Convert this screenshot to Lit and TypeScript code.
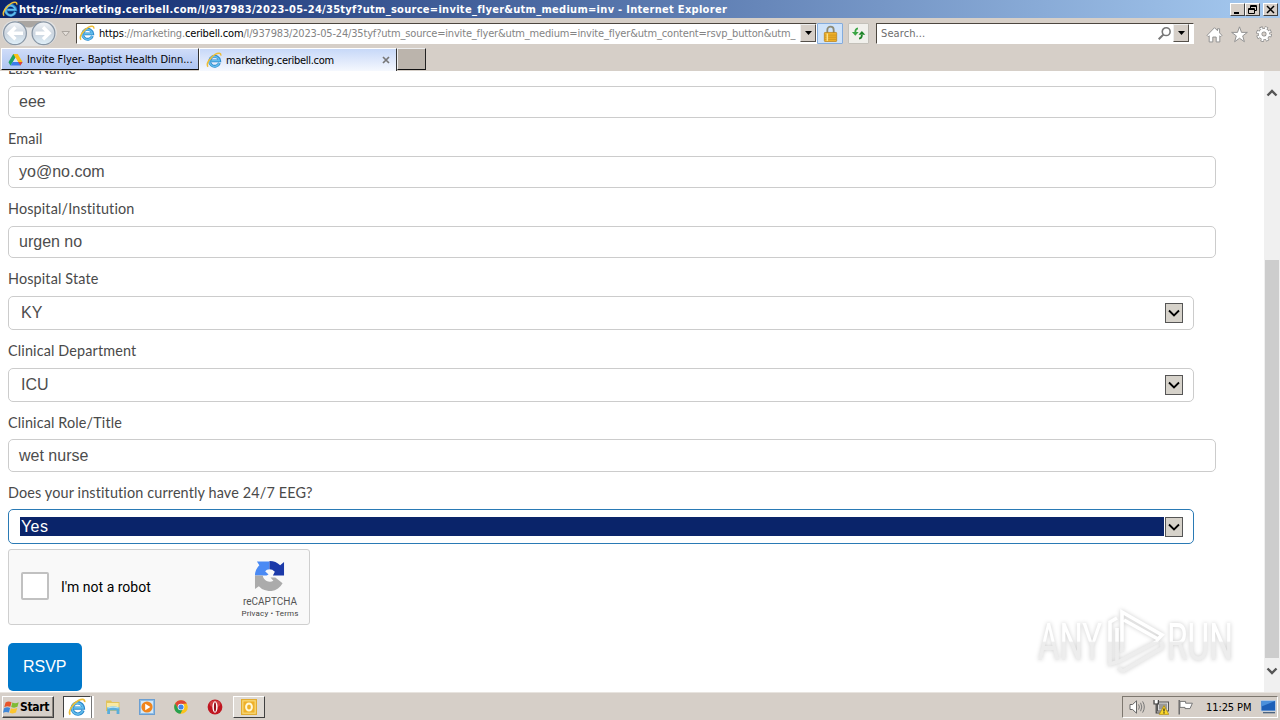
import { LitElement, html, css, svg } from 'lit';
import { customElement, property } from 'lit/decorators.js';
import { classMap } from 'lit/directives/class-map.js';

interface Field {
  label: string;
  value: string;
  kind: 'text' | 'select';
  tight?: boolean;
  focused?: boolean;
}

const FIELDS: Field[] = [
  { label: 'Last Name', value: 'eee', kind: 'text' },
  { label: 'Email', value: 'yo@no.com', kind: 'text' },
  { label: 'Hospital/Institution', value: 'urgen no', kind: 'text' },
  { label: 'Hospital State', value: 'KY', kind: 'select' },
  { label: 'Clinical Department', value: 'ICU', kind: 'select' },
  { label: 'Clinical Role/Title', value: 'wet nurse', kind: 'text', tight: true },
  { label: 'Does your institution currently have 24/7 EEG?', value: 'Yes', kind: 'select', tight: true, focused: true },
];

const icons: Record<string, unknown> = {
  ie: svg`
    <path d="M13.4 11 A5 5 0 1 1 13.7 8.9 H5.4" fill="none" stroke="#2b88cc" stroke-width="2.9"/>
    <path d="M13.2 11 A4.9 4.9 0 1 1 13.4 8.8 H5.4" fill="none" stroke="#62bdec" stroke-width="1.5"/>
    <path d="M2 14.8 C-0.4 12 4.2 5 9.2 2.3 C12.4 .6 15.2 .8 14.8 3.6" fill="none" stroke="#eebd36" stroke-width="1.5"/>`,
  drive: svg`
    <path d="M5.6 2 H10.2 L5 11 L2.6 14.4 L0.5 10.8Z" fill="#1fa463"/>
    <path d="M5.6 2 H10.4 L15.5 10.6 H10.8Z" fill="#fbc116"/>
    <path d="M8 6.2 L10.6 10.6 H5.4Z" fill="#d9e4f8"/>
    <path d="M5 10.6 H15.5 L13.2 14.5 H2.7Z" fill="#3b7bea"/>
    <path d="M10.8 10.6 H15.5 L13.2 14.5Z" fill="#e34133"/>`,
  lock: svg`
    <path d="M5 8 V4.6 A3 3 0 0 1 11 4.6 V8" fill="none" stroke="#8c8a76" stroke-width="1.7"/>
    <rect x="2.2" y="7" width="11.6" height="8.5" rx=".6" fill="#eeb12c" stroke="#b98119" stroke-width=".7"/>
    <path d="M2.6 9.5H13.4M2.6 11.5H13.4M2.6 13.5H13.4" stroke="#c98d18" stroke-width=".7"/>
    <path d="M5 8V15" stroke="#fbe08a" stroke-width="1.4"/>`,
  refresh: svg`
    <path d="M7.4 2.6 Q4.6 3 4.6 6.5" fill="none" stroke="#3aa544" stroke-width="1.9"/>
    <path d="M1 6.4 H8.2 L4.6 10.4Z" fill="#3aa544"/>
    <path d="M8.6 13.4 Q11.6 13 11.6 9.5" fill="none" stroke="#1c8427" stroke-width="1.9"/>
    <path d="M8 9.4 H15.2 L11.6 5.4Z" fill="#1c8427"/>`,
  search: svg`
    <circle cx="9.8" cy="6" r="4.2" fill="#fff" stroke="#777" stroke-width="1.7"/>
    <path d="M6.8 9.2 L1.8 14.2" stroke="#777" stroke-width="2.2"/>`,
  home: svg`
    <path d="M1 8.8 L8 1.6 L10.8 4.4 V2.6 H12.8 V6.5 L15 8.8 L13.8 10 L13 9.2 V15 H9.6 V10.4 H6.4 V15 H3 V9.2 L2.2 10Z"
      fill="#fff" stroke="#8f8f8f" stroke-width=".9" stroke-linejoin="round"/>`,
  star: svg`
    <path d="M8 .8 L9.9 6 H15.4 L11 9.3 L12.6 14.8 L8 11.5 L3.4 14.8 L5 9.3 L.6 6 H6.1Z"
      fill="#fff" stroke="#8f8f8f" stroke-width=".9" stroke-linejoin="round"/>`,
  gear: svg`
    <circle cx="8" cy="8" r="6.2" fill="none" stroke="#8a8a8a" stroke-width="3.4" stroke-dasharray="2.9 1.97"/>
    <circle cx="8" cy="8" r="3.9" fill="none" stroke="#8a8a8a" stroke-width="4.2"/>
    <circle cx="8" cy="8" r="6" fill="none" stroke="#fff" stroke-width="2.2" stroke-dasharray="1.9 2.81" stroke-dashoffset="-.4"/>
    <circle cx="8" cy="8" r="3.9" fill="none" stroke="#fff" stroke-width="2.8"/>`,
  windows: svg`
    <path d="M2.4 3.2 Q5 1.4 8 3 L6.9 7.4 Q4 6.2 1.2 7.7Z" fill="#e8552a"/>
    <path d="M8.8 3.3 Q11.6 4.6 14.8 3 L13.6 7.4 Q10.8 8.8 7.7 7.6Z" fill="#7fbb35"/>
    <path d="M1 8.6 Q4 7.2 6.7 8.4 L5.5 12.8 Q2.8 11.6 0 13Z" fill="#3f87d8"/>
    <path d="M7.5 8.6 Q10.4 9.8 13.4 8.4 L12.2 12.8 Q9.4 14.2 6.3 13Z" fill="#fcc52e"/>`,
  explorer: svg`
    <path d="M1 1.6 H6 L7 3 H14.5 V12 H1Z" fill="#e2c45c"/>
    <path d="M2 4 H13.6 V10 H2Z" fill="#f8e9a4"/>
    <path d="M2.2 8.6 Q8 6.6 14.4 8.6 V15 H11.6 V11.6 H5 V15 H2.2Z" fill="#5aaedb"/>
    <path d="M3 9 Q8 7.4 13.6 9" fill="none" stroke="#b6e4f6" stroke-width="1.2"/>`,
  media: svg`
    <rect x=".5" y=".5" width="15" height="15" fill="#8ebde6" stroke="#6b9fd2"/>
    <rect x="2" y="2" width="12" height="12" fill="#d3e8f8"/>
    <circle cx="8" cy="8" r="5.6" fill="#f0851c"/>
    <path d="M6.2 4.8 L11.4 8 L6.2 11.2Z" fill="#fff"/>`,
  chrome: svg`
    <circle cx="8" cy="8" r="6.8" fill="#fbc31a"/>
    <path d="M2.1 4.6 A6.8 6.8 0 0 1 13.9 4.6 L8 5 L5 9.7Z" fill="#df4536"/>
    <path d="M2.1 4.6 L5.4 10 L9.6 10.6 L7.4 14.8 A6.8 6.8 0 0 1 2.1 4.6Z" fill="#27a050"/>
    <circle cx="8" cy="8" r="3.3" fill="#fff"/>
    <circle cx="8" cy="8" r="2.6" fill="#4285e8"/>`,
  opera: svg`
    <circle cx="8" cy="8" r="7.4" fill="#c01620"/>
    <ellipse cx="8" cy="5" rx="5.4" ry="3.5" fill="#dc5a5a" opacity=".6"/>
    <ellipse cx="8" cy="8" rx="2.6" ry="5.8" fill="#fff"/>
    <ellipse cx="8" cy="8" rx="1.1" ry="4.8" fill="#96101a"/>`,
  outlook: svg`
    <rect x=".6" y=".6" width="14.8" height="14.8" fill="#fbdc7c" stroke="#e2ab31" stroke-width="1.2"/>
    <path d="M2.4 2.4 H13.6 V13.6 H2.4Z" fill="#eeb02a"/>
    <ellipse cx="8" cy="8" rx="2.9" ry="3.6" fill="none" stroke="#fff8d8" stroke-width="2"/>`,
  speaker: svg`
    <path d="M1 5.5 H3.6 L7.5 1.8 V14.2 L3.6 10.5 H1Z" fill="#fff" stroke="#666" stroke-width="1"/>
    <path d="M9.6 5.4 Q11.2 8 9.6 10.6 M11.6 3.8 Q14 8 11.6 12.2 M13.6 2.4 Q17 8 13.6 13.6" fill="none" stroke="#777" stroke-width="1"/>`,
  network: svg`
    <rect x="4.5" y="3" width="11" height="9" fill="#ddd" stroke="#555"/>
    <rect x="6" y="4.5" width="8" height="6" fill="#9a9a9a"/>
    <path d="M1.6 1 H4.8 V4.4 H1.6Z" fill="#fff"/>
    <path d="M1 1 V5 H5.4 V1 M3.2 5 V14 H9" fill="none" stroke="#444" stroke-width="1.2"/>
    <path d="M11 6.6 L15.8 15.4 H6.2Z" fill="#fcd92a" stroke="#ac8708" stroke-width=".7"/>
    <path d="M11 9.4 V12.4 M11 13.2 V14.4" stroke="#222" stroke-width="1.2"/>`,
  flag: svg`
    <path d="M2.2 1 V15.4" stroke="#666" stroke-width="1.4"/>
    <path d="M3 2.4 H8.6 V4.2 H15.4 L13 9.6 H8 V8.4 H3Z" fill="#fff" stroke="#777" stroke-width="1"/>`,
  desktop: svg`
    <rect x="1" y="1.5" width="14.5" height="10.5" fill="#1d5fb8" stroke="#bcd2ea" stroke-width=".8"/>
    <path d="M1.5 2 H15 L1.5 7.5Z" fill="#4b90dc"/>
    <path d="M3 13.7 H15" stroke="#3d5878" stroke-width="1.2"/>`,
};

const icon = (name: string, size = 16) => html`
  <svg width=${size} height=${size} viewBox="0 0 16 16">${icons[name]}</svg>`;

const caret = html`<svg width="7" height="4" viewBox="0 0 7 4"><path d="M0 0H7L3.5 4Z" fill="#000"/></svg>`;

@customElement('browser-chrome')
class BrowserChrome extends LitElement {
  static styles = css`
    :host {
      display: block;
      height: 71px;
      background: #d6cfc8;
      font-family: 'DejaVu Sans Condensed', 'DejaVu Sans', sans-serif;
      font-stretch: condensed;
      font-size: 11px;
      color: #000;
    }
    svg { display: block; flex: none; }
    .title {
      display: flex;
      align-items: center;
      height: 18px;
      padding: 0 2px;
      box-sizing: border-box;
      background: linear-gradient(90deg, #0a246a, #a6caf0);
      color: #fff;
    }
    .title-text {
      flex: 1;
      margin-left: 1px;
      white-space: nowrap;
      font-family: 'DejaVu Sans', sans-serif;
      font-stretch: condensed;
      font-size: 11px;
      font-weight: bold;
      letter-spacing: 0.29px;
    }
    .win {
      width: 15px;
      height: 13px;
      box-sizing: border-box;
      background: #d6cfc8;
      border: 1px solid;
      border-color: #fff #404040 #404040 #fff;
    }
    .win.close { margin-left: 3px; }
    .nav {
      display: flex;
      align-items: center;
      height: 30px;
    }
    .address {
      display: flex;
      align-items: center;
      width: 741px;
      height: 21px;
      box-sizing: border-box;
      border: 1px solid #fff;
      border-top: 1px solid #4c463f;
      border-left-color: #4c463f;
      background: #fff;
      padding-left: 2px;
    }
    .url {
      width: 698px;
      margin-left: 4px;
      overflow: hidden;
      white-space: nowrap;
      color: #848484;
      letter-spacing: -0.17px;
    }
    .url b { font-weight: normal; color: #000; }
    .drop {
      display: flex;
      align-items: center;
      justify-content: center;
      width: 16px;
      height: 18px;
      box-sizing: border-box;
      background: #d6cfc8;
      border: 1px solid;
      border-color: #eee #55504a #55504a #eee;
      margin-left: auto;
    }
    .tool {
      display: flex;
      align-items: center;
      justify-content: center;
      height: 21px;
      box-sizing: border-box;
      border: 1px solid #c4c1ba;
      border-radius: 1px;
    }
    .tool.lock { width: 26px; background: #cfe3fa; border-color: #84acdd; }
    .tool.refresh { width: 21px; background: #f1f0ec; margin-left: 5px; }
    .search {
      display: flex;
      align-items: center;
      width: 318px;
      height: 21px;
      box-sizing: border-box;
      margin-left: 7px;
      padding: 0 4px;
      background: #fff;
      border: 1px solid #fff;
      border-top-color: #4c463f;
      border-left-color: #4c463f;
      color: #6d6d6d;
    }
    .search span { flex: 1; letter-spacing: 0.1px; }
    .search .drop { margin-left: 1px; }
    .links { display: flex; gap: 8px; margin-left: 12px; padding-top: 3px; }
    .tabs { display: flex; height: 23px; }
    .tab {
      display: flex;
      align-items: center;
      box-sizing: border-box;
      height: 22px;
      white-space: nowrap;
    }
    .tab.back {
      width: 198px;
      margin-left: 1px;
      padding-left: 6px;
      background: linear-gradient(#cfdcf8, #aec5f2);
      border: 1px solid #fff;
      border-right: 1px solid #333;
      border-bottom: 1px solid #111;
    }
    .tab.front {
      width: 198px;
      height: 23px;
      padding: 0 6px;
      background: linear-gradient(#c7d8f8, #f5f8fe);
      border: 1px solid #fff;
      border-right-color: #333;
      border-bottom: 0;
    }
    .tab span { margin-left: 4px; flex: 1; letter-spacing: -0.05px; }
    .tab.front span { letter-spacing: -0.28px; }
    .tab.new {
      width: 29px;
      background: #bbb4ac;
      border: 1px solid #eee;
      border-right: 1px solid #222;
      border-bottom: 1px solid #111;
    }
  `;

  render() {
    return html`
      <div class="title">
        ${icon('ie', 16)}
        <span class="title-text">https://marketing.ceribell.com/l/937983/2023-05-24/35tyf?utm_source=invite_flyer&amp;utm_medium=inv - Internet Explorer</span>
        <div class="win"><svg width="13" height="11"><path d="M3 9H8" stroke="#000" stroke-width="2"/></svg></div>
        <div class="win"><svg width="13" height="11"><path d="M4.5 4V1.5H10.5V6.5H8.5M4.5 2.5H10.5M2.5 4.5H8.5V9.5H2.5ZM2.5 5.5H8.5" fill="none" stroke="#000"/></svg></div>
        <div class="win close"><svg width="13" height="11"><path d="M3 2L10 9M10 2L3 9" stroke="#000" stroke-width="1.5"/></svg></div>
      </div>
      <div class="nav">
        ${this.renderTravel()}
        <div class="address">
          ${icon('ie', 16)}
          <div class="url"><b>https</b>://marketing.<b>ceribell.com</b>/l/937983/2023-05-24/35tyf?utm_source=invite_flyer&amp;utm_medium=invite_flyer&amp;utm_content=rsvp_button&amp;utm_</div>
          <div class="drop">${caret}</div>
        </div>
        <div class="tool lock">${icon('lock', 17)}</div>
        <div class="tool refresh">${icon('refresh', 15)}</div>
        <div class="search"><span>Search...</span>${icon('search', 15)}<div class="drop">${caret}</div></div>
        <div class="links">${icon('home', 17)}${icon('star', 17)}${icon('gear', 16)}</div>
      </div>
      <div class="tabs">
        <div class="tab back">${icon('drive', 15)}<span>Invite Flyer- Baptist Health Dinn...</span></div>
        <div class="tab front">
          ${icon('ie', 16)}<span>marketing.ceribell.com</span>
          <svg width="8" height="8"><path d="M1 1L7 7M7 1L1 7" stroke="#777" stroke-width="1.7"/></svg>
        </div>
        <div class="tab new"></div>
      </div>
    `;
  }

  renderTravel() {
    return html`
      <svg width="76" height="30" viewBox="0 0 76 30">
        <defs>
          <linearGradient id="orb" x1="0" y1="0" x2="0" y2="1">
            <stop offset="0" stop-color="#f4f6f9"/>
            <stop offset=".5" stop-color="#ccd5df"/>
            <stop offset="1" stop-color="#dff0fa"/>
          </linearGradient>
        </defs>
        <path d="M15 2.5 H44 Q56 3 57 15 Q55 27 43 28 H15 Q3 26 2 15 Q3 3 15 2.5Z" fill="#e2e2e2"/>
        <path d="M17 3 H42 L34 8 Q29 11 24 8Z" fill="#aaa6a2"/>
        <circle cx="15" cy="15.3" r="11.4" fill="url(#orb)" stroke="#8896a5" stroke-width="1.2"/>
        <circle cx="43.5" cy="15.3" r="11.4" fill="url(#orb)" stroke="#8896a5" stroke-width="1.2"/>
        <path d="M23 15.3H10M15.5 9.3L9.3 15.3L15.5 21.3" fill="none" stroke="#fff" stroke-width="3.4"/>
        <path d="M35.5 15.3H48.5M43 9.3L49.2 15.3L43 21.3" fill="none" stroke="#fff" stroke-width="3.4"/>
        <path d="M62 13.5H69.5L65.7 18Z" fill="#e4dfda" stroke="#aaa49e"/>
      </svg>`;
  }
}

@customElement('form-field')
class FormField extends LitElement {
  @property({ type: Object }) field!: Field;

  static styles = css`
    :host { display: block; }
    .label {
      display: flex;
      align-items: center;
      height: 38px;
      padding-top: 2px;
      box-sizing: border-box;
      font-family: Lato, 'Open Sans', sans-serif;
      font-size: 14.4px;
      letter-spacing: 0.14px;
      color: #4a4a4a;
      white-space: nowrap;
    }
    .tight .label { height: 37px; padding-top: 3px; }
    .box {
      display: flex;
      align-items: center;
      box-sizing: border-box;
      width: 1208px;
      height: 32px;
      padding: 0 10px;
      border: 1px solid #ccc;
      border-radius: 5px;
      background: #fff;
      font-family: 'Liberation Sans', Arial, sans-serif;
      font-size: 16px;
      color: #4d4d4d;
    }
    .tight .box { height: 33px; }
    .select .box { width: 1186px; height: 34px; }
    .select.tight .box { height: 35px; }
    .focused .box { border-color: #2a7ab5; }
    .value { flex: 1; line-height: 19px; margin-bottom: 2px; }
    .tight .value { margin-bottom: 0; }
    .select .value { padding-left: 2px; margin-right: 1px; }
    .focused .value {
      margin-left: 1px;
      padding-left: 1px;
      background: #0a246a;
      color: #fff;
      letter-spacing: 0.4px;
    }
    .arrow {
      width: 18px;
      height: 20px;
      box-sizing: border-box;
      border: 1px solid #555;
      background: #d6d2ca;
    }
    .arrow svg { display: block; }
  `;

  render() {
    const f = this.field;
    const classes = { select: f.kind === 'select', tight: !!f.tight, focused: !!f.focused };
    return html`
      <div class=${classMap(classes)}>
        <div class="label">${f.label}</div>
        <div class="box">
          <span class="value">${f.value}</span>
          ${f.kind === 'select' ? html`
            <div class="arrow">
              <svg width="16" height="18"><path d="M3 6.5L8 11.5L13 6.5" fill="none" stroke="#000" stroke-width="1.8"/></svg>
            </div>` : ''}
        </div>
      </div>
    `;
  }
}

@customElement('captcha-box')
class CaptchaBox extends LitElement {
  static styles = css`
    :host {
      display: flex;
      align-items: center;
      width: 302px;
      height: 76px;
      box-sizing: border-box;
      margin-top: 5px;
      padding: 0 10px 0 12px;
      border: 1px solid #cfcfcf;
      border-radius: 3px;
      background: #f9f9f9;
      font-family: Roboto, sans-serif;
      color: #000;
    }
    .check {
      width: 28px;
      height: 28px;
      margin-top: -2px;
      box-sizing: border-box;
      border: 2px solid #c1c1c1;
      border-radius: 2px;
      background: #fff;
    }
    .text { flex: 1; margin-left: 12px; font-size: 14px; }
    .brand {
      display: flex;
      flex-direction: column;
      align-items: center;
      width: 58px;
      padding-top: 5px;
      color: #555;
      white-space: nowrap;
    }
    .brand svg { margin-right: 1px; }
    .name { font-size: 10px; line-height: 12px; margin-top: 5px; }
    .terms { font-size: 8px; line-height: 12px; color: #444; letter-spacing: 0.15px; }
  `;

  render() {
    return html`
      <div class="check"></div>
      <div class="text">I'm not a robot</div>
      <div class="brand">
        <svg width="31" height="31" viewBox="0 0 32 32">
          <path d="M1 16 A15 15 0 0 1 5.5 5.5 L3 1.5 H16 V9.5 Q13 9.5 11.5 11.5 L15 15 L13 16Z" fill="#4a8af4"/>
          <path d="M16 1 A15 15 0 0 1 27 5.5 L31 2 V16 H19.5 L21.5 12 Q19 9.5 16 9.5Z" fill="#1c3aa9"/>
          <path d="M1 16 H9 A7.5 7.5 0 0 0 20 21.5 L17 18 H22 L29.5 24 A15 15 0 0 1 5 27 L1 30Z" fill="#ababab"/>
        </svg>
        <div class="name">reCAPTCHA</div>
        <div class="terms">Privacy • Terms</div>
      </div>
    `;
  }
}

@customElement('task-bar')
class TaskBar extends LitElement {
  static styles = css`
    :host {
      display: flex;
      align-items: center;
      height: 28px;
      box-sizing: border-box;
      padding: 1px 2px 0;
      background: #d6cfc8;
      border-top: 1px solid #e8e4df;
      font-family: 'DejaVu Sans Condensed', 'DejaVu Sans', sans-serif;
      font-stretch: condensed;
      font-size: 11px;
      color: #000;
    }
    svg { display: block; }
    .start, .app {
      display: flex;
      align-items: center;
      height: 22px;
      box-sizing: border-box;
      border: 1px solid;
      border-color: #fff #404040 #404040 #fff;
    }
    .start {
      width: 52px;
      font-weight: bold;
      font-size: 12px;
      letter-spacing: -0.3px;
      box-shadow: inset -1px -1px #8b857e;
    }
    .apps { display: flex; margin-left: 9px; }
    .app { width: 34px; justify-content: center; border-color: transparent; }
    .app.active { width: 28px; background: #fff; border-color: #404040 #fff #fff #404040; }
    .grip {
      width: 3px;
      height: 22px;
      margin-right: 2px;
      box-sizing: border-box;
      border-left: 1px solid #777;
      background: #fff;
    }
    .app.raised { width: 32px; margin-left: 1px; border-color: #fff #404040 #404040 #fff; background: #dfdad4; }
    .tray {
      display: flex;
      align-items: center;
      width: 156px;
      height: 22px;
      box-sizing: border-box;
      margin-left: auto;
      padding: 0 1px 0 6px;
      border: 1px solid;
      border-color: #7d776f #fff #fff #7d776f;
      gap: 8px;
    }
    .clock { margin-left: 5px; flex: 1; white-space: nowrap; letter-spacing: -0.1px; }
  `;

  render() {
    return html`
      <div class="start">${icon('windows', 17)}Start</div>
      <div class="apps">
        <div class="app active">${icon('ie', 18)}</div>
        <div class="grip"></div>
        ${['explorer', 'media', 'chrome', 'opera'].map((name) => html`<div class="app">${icon(name)}</div>`)}
        <div class="app raised">${icon('outlook', 16)}</div>
      </div>
      <div class="tray">
        ${icon('speaker')}${icon('network')}${icon('flag')}
        <span class="clock">11:25 PM</span>
        ${icon('desktop')}
      </div>
    `;
  }
}

@customElement('app-root')
class AppRoot extends LitElement {
  static styles = css`
    :host {
      display: flex;
      flex-direction: column;
      width: 1280px;
      height: 720px;
      overflow: hidden;
      position: relative;
      background: #fff;
    }
    browser-chrome, task-bar { flex: none; }
    .view { display: flex; flex: 1; min-height: 0; overflow: hidden; }
    .page { flex: 1; padding-left: 8px; overflow: hidden; }
    .form { margin-top: -23px; }
    .submit {
      display: block;
      width: 73.5px;
      height: 48px;
      margin-top: 18px;
      padding: 0;
      border: 0;
      border-radius: 5px;
      background: #0078ca;
      color: #fff;
      font: 16px 'Liberation Sans', Arial, sans-serif;
    }
    .scroll {
      display: flex;
      flex-direction: column;
      align-items: center;
      width: 16px;
      background: #f0f0f0;
    }
    .scroll svg { display: block; margin-top: 18px; }
    .thumb { width: 14px; height: 398px; margin-top: 163px; background: #cdcdcd; }
    .scroll .thumb + svg { margin-top: 9px; }
    .watermark {
      position: absolute;
      left: 1030px;
      top: 602px;
      filter: drop-shadow(0 0 2px rgba(0, 0, 0, 0.2));
    }
    .watermark text {
      font-family: Roboto, sans-serif;
      font-size: 52px;
      font-weight: 400;
    }
  `;

  render() {
    return html`
      <browser-chrome></browser-chrome>
      <div class="view">
        <div class="page">
          <div class="form">
            ${FIELDS.map((f) => html`<form-field .field=${f}></form-field>`)}
            <captcha-box></captcha-box>
            <button class="submit">RSVP</button>
          </div>
        </div>
        <div class="scroll">
          <svg width="12" height="8"><path d="M1.5 6.5L6 2L10.5 6.5" fill="none" stroke="#555" stroke-width="2.4"/></svg>
          <div class="thumb"></div>
          <svg width="12" height="8"><path d="M1.5 1.5L6 6L10.5 1.5" fill="none" stroke="#555" stroke-width="2.4"/></svg>
        </div>
      </div>
      <task-bar></task-bar>
      ${this.renderWatermark()}
    `;
  }

  renderWatermark() {
    return html`
      <svg class="watermark" width="210" height="78" viewBox="0 0 210 78">
        <defs>
          <linearGradient id="fade" gradientUnits="userSpaceOnUse" x1="0" y1="0" x2="0" y2="78">
            <stop offset=".5" stop-color="#fff"/>
            <stop offset=".52" stop-color="#ededed"/>
          </linearGradient>
        </defs>
        <text x="8" y="58" fill="url(#fade)" textLength="64" lengthAdjust="spacingAndGlyphs">ANY</text>
        <text x="137" y="58" fill="url(#fade)" textLength="66" lengthAdjust="spacingAndGlyphs">RUN</text>
        <g fill="none" stroke="url(#fade)" stroke-width="3.6">
          <path d="M92 50V10L132 33L128 37L94 18"/>
          <path d="M87 16L80 20V62L87 60V26"/>
          <path d="M88 60L128 39M88 66L93 69L132 46V40"/>
        </g>
      </svg>`;
  }
}
